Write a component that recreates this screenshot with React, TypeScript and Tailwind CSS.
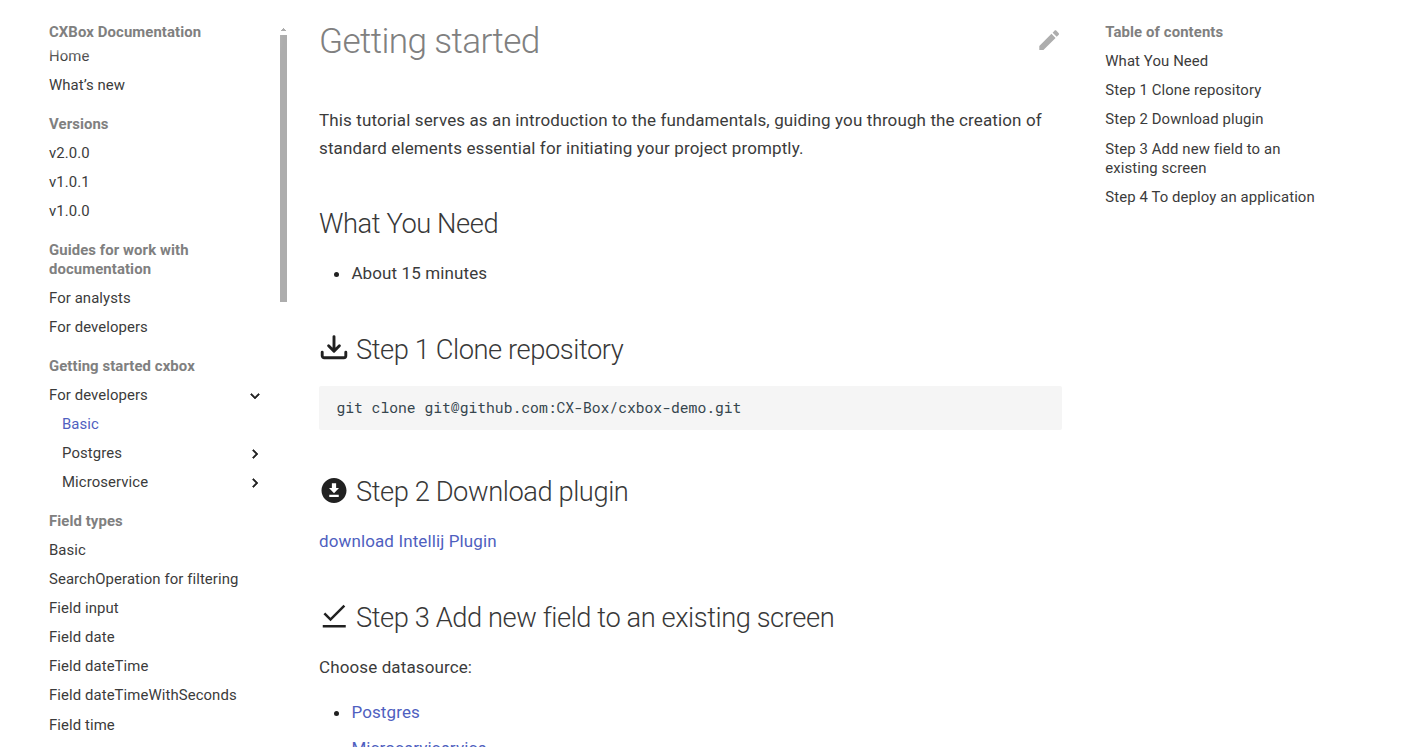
import React from 'react';

type NavItem = { label: string; nested?: boolean; active?: boolean; arrow?: 'down' | 'right' };
type NavSection = { title: string; items: NavItem[] };

const sections: NavSection[] = [
  { title: 'Versions', items: [{ label: 'v2.0.0' }, { label: 'v1.0.1' }, { label: 'v1.0.0' }] },
  {
    title: 'Guides for work with documentation',
    items: [{ label: 'For analysts' }, { label: 'For developers' }],
  },
  {
    title: 'Getting started cxbox',
    items: [
      { label: 'For developers', arrow: 'down' },
      { label: 'Basic', nested: true, active: true },
      { label: 'Postgres', nested: true, arrow: 'right' },
      { label: 'Microservice', nested: true, arrow: 'right' },
    ],
  },
  {
    title: 'Field types',
    items: [
      { label: 'Basic' },
      { label: 'SearchOperation for filtering' },
      { label: 'Field input' },
      { label: 'Field date' },
      { label: 'Field dateTime' },
      { label: 'Field dateTimeWithSeconds' },
      { label: 'Field time' },
    ],
  },
];

const toc = [
  'What You Need',
  'Step 1 Clone repository',
  'Step 2 Download plugin',
  'Step 3 Add new field to an existing screen',
  'Step 4 To deploy an application',
];

function Chevron({ down }: { down?: boolean }) {
  return (
    <svg
      viewBox="0 0 24 24"
      className={`size-[18px] shrink-0 fill-[#212121] stroke-[#212121] stroke-[0.8] ${down ? 'rotate-90' : ''}`}
    >
      <path d="M8.59 16.58 13.17 12 8.59 7.41 10 6l6 6-6 6-1.41-1.42z" />
    </svg>
  );
}

function NavRow({ item }: { item: NavItem }) {
  return (
    <li className={`mt-[9.7px] flex items-center justify-between ${item.nested ? 'pl-[13px]' : ''}`}>
      <a className={item.active ? 'text-[#4f5fc0]' : ''}>{item.label}</a>
      {item.arrow && (
        <span className="flex h-[19.39px] items-center">
          <Chevron down={item.arrow === 'down'} />
        </span>
      )}
    </li>
  );
}

function Heading({ icon, children }: { icon?: React.ReactNode; children: React.ReactNode }) {
  return (
    <h2 className="flex h-[38px] items-center text-[27.3px] font-light leading-[38px] tracking-[-0.43px] text-[#383838]">
      {icon && <span className="mr-[7px] flex w-[30px] justify-center pb-1">{icon}</span>}
      {children}
    </h2>
  );
}

const trayIcon = (
  <svg
    viewBox="0 0 30 30"
    className="size-[30px] fill-none stroke-[#212121] stroke-[2.9]"
    strokeLinecap="round"
    strokeLinejoin="round"
  >
    <path d="M15 3.6v14M9.6 12.8l5.4 5.4 5.4-5.4M3.2 19.2v3.6a2 2 0 0 0 2 2h19.6a2 2 0 0 0 2-2v-3.6" />
  </svg>
);

const offlineIcon = (
  <svg viewBox="0 0 24 24" className="size-[31px] fill-[#212121]">
    <path d="M12 2C6.49 2 2 6.49 2 12s4.49 10 10 10 10-4.49 10-10S17.51 2 12 2zm-1.7 8V6.2h3.4V10h2.3l-4 4.1L8 10h2.3zm5.5 7.2H8.2v-1.9h7.6v1.9z" />
  </svg>
);

const checkIcon = (
  <svg viewBox="0 0 24 24" className="size-[30px] fill-[#212121]">
    <path d="M21 4.4 19.6 3 9.2 13.4 5 9.2l-1.4 1.4 5.6 5.6L21 4.4M21.4 19.2v2H3v-2h18.4z" />
  </svg>
);

export default function App() {
  return (
    <div className="flex h-[747px] w-[1422px] overflow-hidden bg-white font-['Roboto',sans-serif] text-[#3b3b3b]">
      <aside className="flex w-[287px] shrink-0 pl-[49px] pt-[22px] text-[14.9px] leading-[19.39px] tracking-[0.09px]">
        <nav className="w-[215px] shrink-0 pt-[0.7px]">
          <div className="relative font-bold text-[#808080] shadow-[0_0_9px_9px_white]">CXBox Documentation</div>
          <ul className="-mt-[5px]">
            <NavRow item={{ label: 'Home' }} />
            <NavRow item={{ label: 'What’s new' }} />
          </ul>
          {sections.map((s) => (
            <section key={s.title} className="mt-[19.39px]">
              <h3 className="w-[180px] font-bold text-[#808080]">{s.title}</h3>
              <ul>
                {s.items.map((i) => (
                  <NavRow key={i.label} item={i} />
                ))}
              </ul>
            </section>
          ))}
        </nav>
        <div className="ml-[16px] flex w-[7px] flex-col items-center pt-[6px]">
          <svg viewBox="0 0 5 3" className="h-[3px] w-[5px] fill-[#adadad]">
            <path d="M2 0h1v1h1v1h1v1H0V2h1V1h1z" />
          </svg>
          <div className="mt-1 h-[267px] w-[7px] bg-[#adadad]" />
        </div>
      </aside>

      <main className="ml-8 w-[743px] shrink-0 pt-[18px] text-[17px] leading-[28.16px] tracking-[0.12px]">
        <div className="flex items-start justify-between">
          <h1 className="text-[35.2px] font-light leading-[46px] tracking-[-0.62px] text-[#808080]">Getting started</h1>
          <svg viewBox="0 0 24 24" className="mt-[9px] size-[26.4px] fill-[#adadad]">
            <path d="M20.71 7.04c.39-.39.39-1.04 0-1.41l-2.34-2.34c-.37-.39-1.02-.39-1.41 0l-1.84 1.83 3.75 3.75M3 17.25V21h3.75L17.81 9.93l-3.75-3.75L3 17.25z" />
          </svg>
        </div>
        <p className="mt-[42px]">
          This tutorial serves as an introduction to the fundamentals, guiding you through the creation of standard
          elements essential for initiating your project promptly.
        </p>
        <div className="mt-[43px]">
          <Heading>What You Need</Heading>
        </div>
        <ul className="mt-[16px] list-disc pl-[32.4px] marker:text-[#212121]">
          <li>About 15 minutes</li>
        </ul>
        <div className="mt-[44px]">
          <Heading icon={trayIcon}>Step 1 Clone repository</Heading>
        </div>
        <pre className="mt-[17px] h-[44px] rounded-[2px] bg-[#f5f5f5] px-[17.4px] font-['Roboto_Mono','DejaVu_Sans_Mono',monospace] text-[14.68px] leading-[44px] tracking-normal text-[#36464e]">
          git clone git@github.com:CX-Box/cxbox-demo.git
        </pre>
        <div className="mt-[43px]">
          <Heading icon={offlineIcon}>Step 2 Download plugin</Heading>
        </div>
        <p className="mt-[16px] text-[#4f5fc0]">download Intellij Plugin</p>
        <div className="mt-[43px]">
          <Heading icon={checkIcon}>Step 3 Add new field to an existing screen</Heading>
        </div>
        <p className="mt-[16px]">Choose datasource:</p>
        <ul className="mt-[17px] list-disc space-y-2 pl-[32.4px] marker:text-[#212121]">
          <li>
            <a className="text-[#4f5fc0]">Postgres</a>
          </li>
          <li>
            <a className="text-[#4f5fc0]">Microserviservice</a>
          </li>
        </ul>
      </main>

      <aside className="ml-[43.3px] w-[213px] shrink-0 pt-[23.2px] text-[14.9px] leading-[19.39px] tracking-[0.1px]">
        <h3 className="font-bold text-[#808080]">Table of contents</h3>
        <ul>
          {toc.map((t) => (
            <li key={t} className="mt-[9.7px]">
              {t}
            </li>
          ))}
        </ul>
      </aside>
    </div>
  );
}
